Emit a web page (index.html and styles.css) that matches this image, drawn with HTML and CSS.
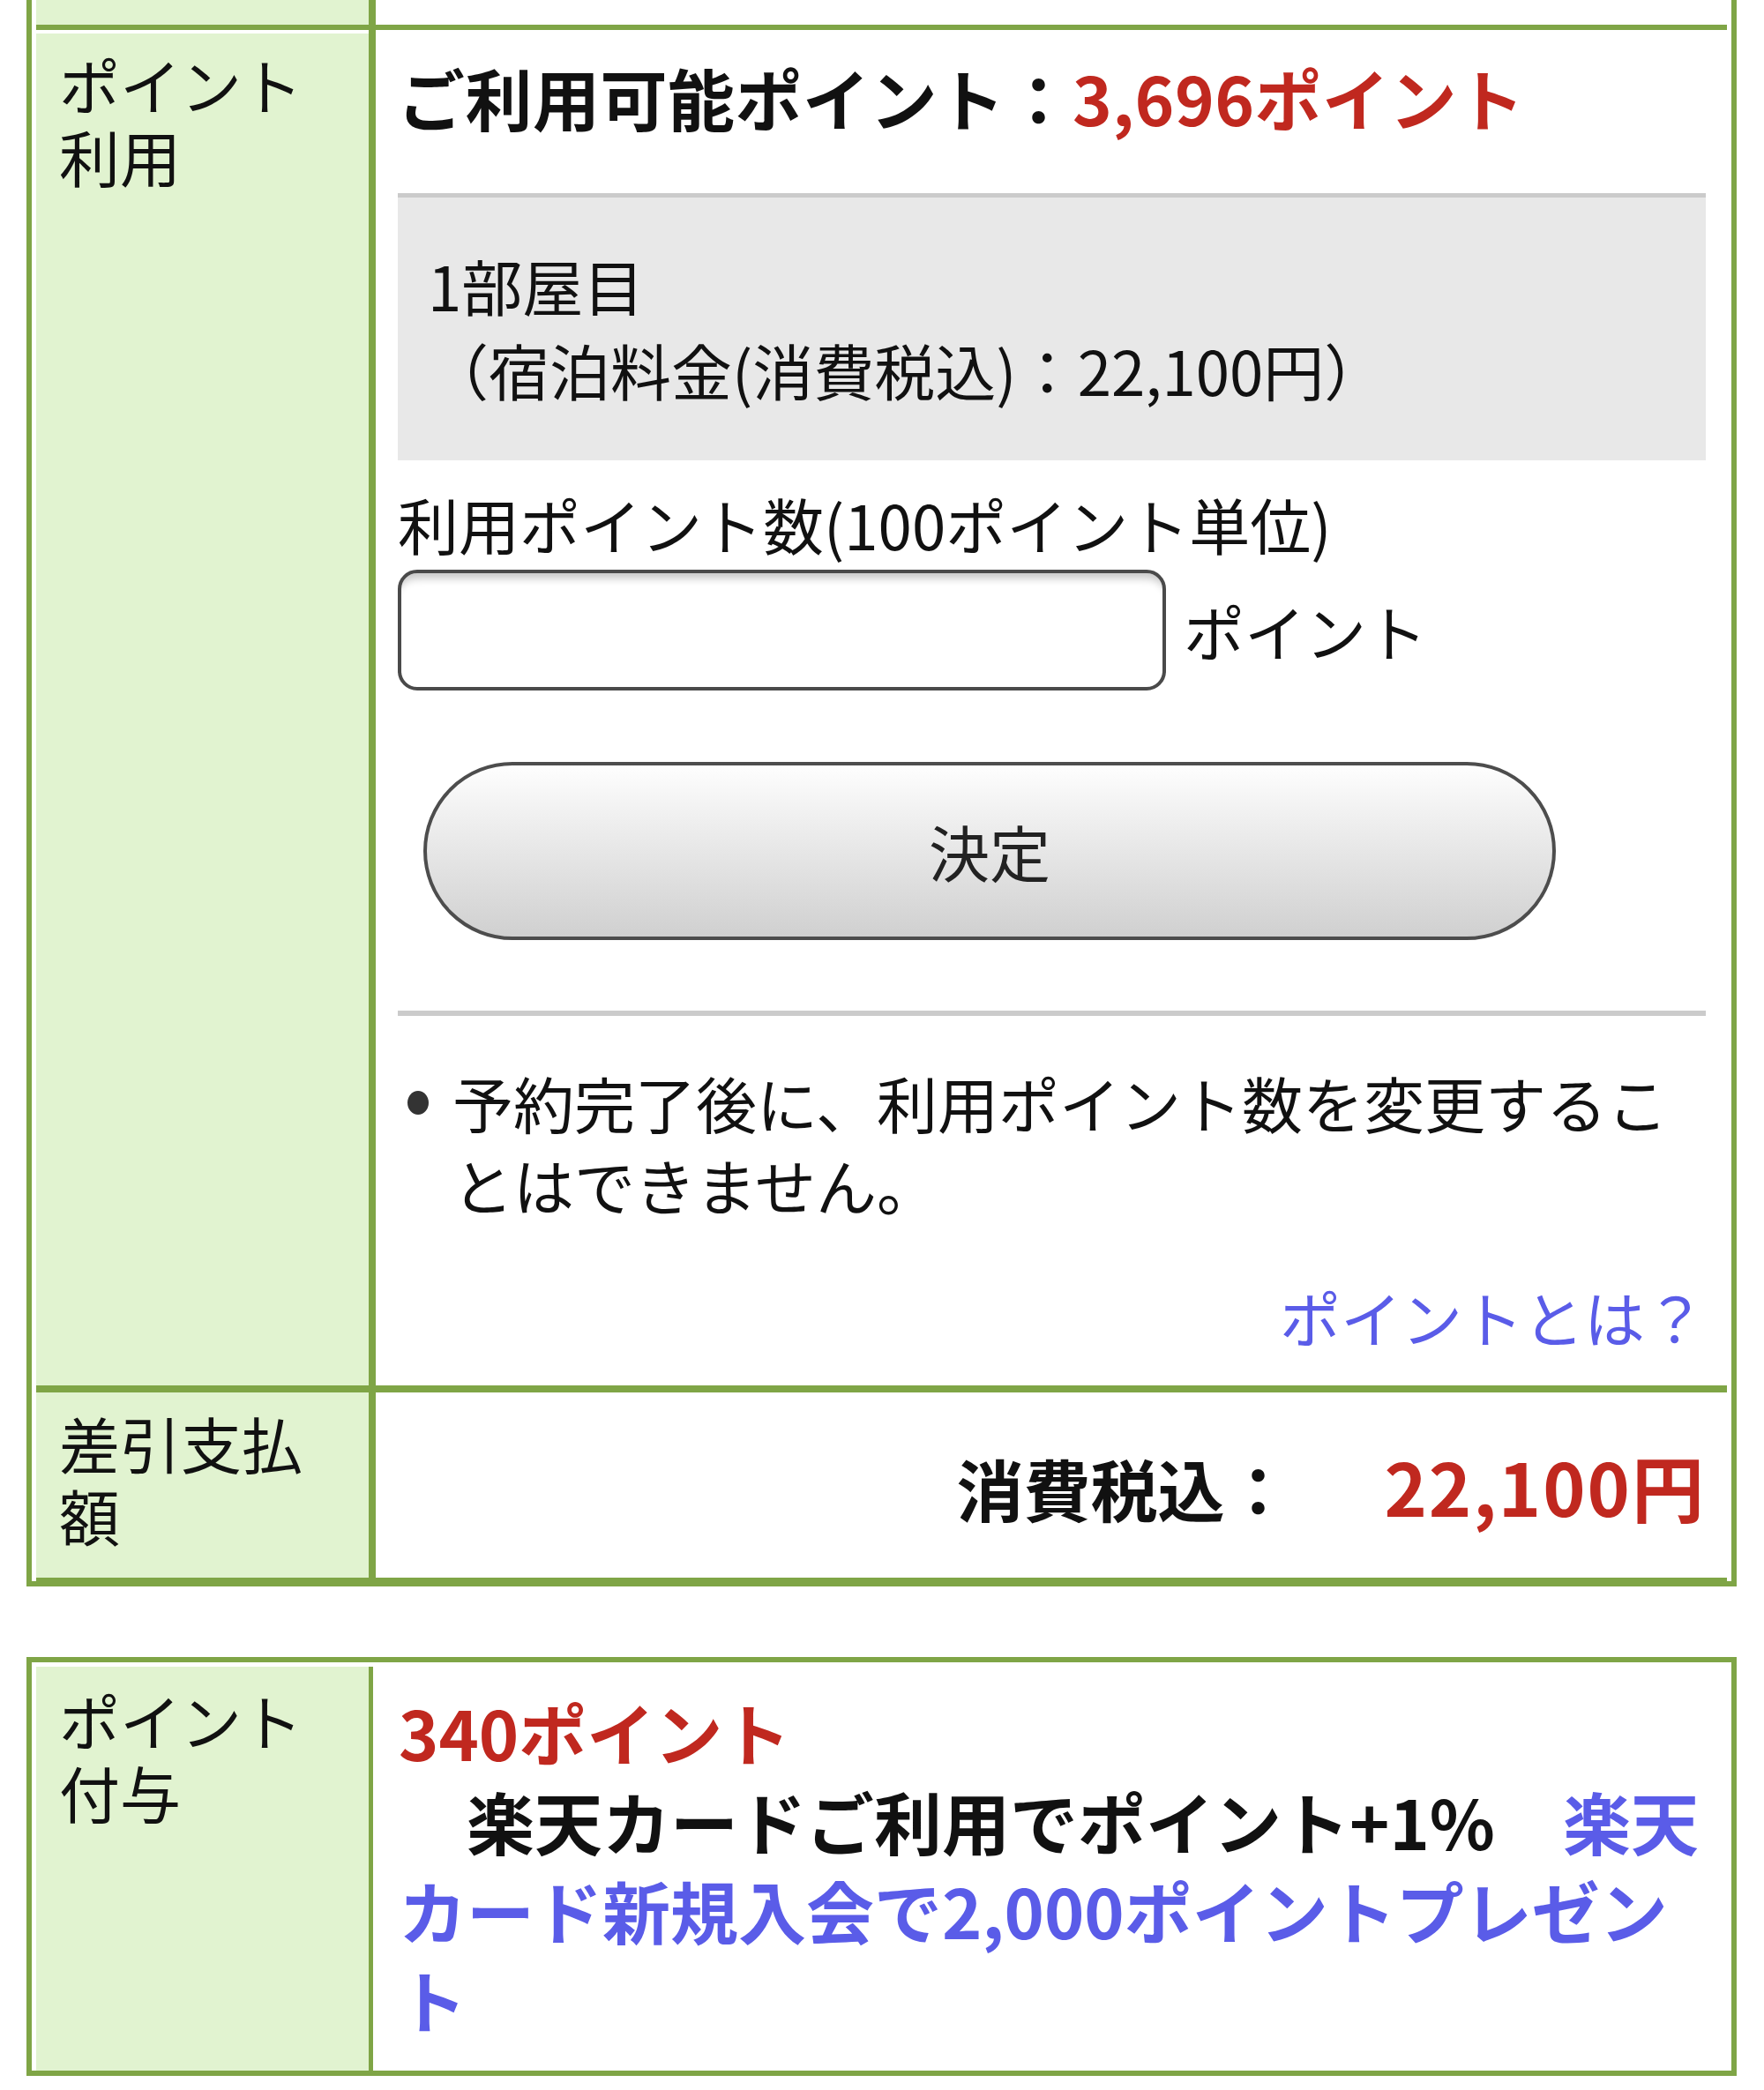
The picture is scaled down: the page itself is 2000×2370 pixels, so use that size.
FILE: index.html
```html
<!DOCTYPE html>
<html>
<head>
  <meta charset="UTF-8">
  <title>ポイント利用</title>
  <link rel="stylesheet" href="styles.css">
</head>
<body>

  <!-- payment table (continues from above) -->
  <table class="pay">
    <tr class="prev">
      <th></th>
      <td></td>
    </tr>
    <tr class="use">
      <th>ポイント利用</th>
      <td>
        <p class="avail">ご利用可能ポイント：<span class="red">3,696ポイント</span></p>
        <div class="room">1部屋目<br>（宿泊料金(消費税込)：22,100円）</div>
        <p class="label">利用ポイント数(100ポイント単位)</p>
        <div class="entry">
          <input type="text" class="points">
          <span>ポイント</span>
        </div>
        <button class="decide">決定</button>
        <hr class="rule">
        <p class="note">予約完了後に、利用ポイント数を変更することはできません。</p>
        <p class="help"><a href="#">ポイントとは？</a></p>
      </td>
    </tr>
    <tr class="last">
      <th>差引支払額</th>
      <td class="total">
        <span class="tax">消費税込：</span><span class="red amount">22,100円</span>
      </td>
    </tr>
  </table>

  <!-- points awarded -->
  <table class="award">
    <tr>
      <th>ポイント付与</th>
      <td>
        <div class="red">340ポイント</div>
        <div>　楽天カードご利用でポイント+1%　<a href="#">楽天カード新規入会で2,000ポイントプレゼント</a></div>
      </td>
    </tr>
  </table>

</body>
</html>
```

FILE: styles.css
```css
body {
  margin: 0;
  font-family: "Noto Sans CJK JP", sans-serif;
  font-size: 69px;
  color: #111;
  background: #fff;
}
p { margin: 0; }
a { color: #5a5ce8; text-decoration: none; }
.red { color: #c0281f; }

table {
  box-sizing: border-box;
  width: 1939px;
  margin-left: 30px;
  table-layout: fixed;
  border-collapse: separate;
  border-spacing: 0;
  border: 6px solid #7fa546;
}
th {
  box-sizing: border-box;
  width: 377px;
  padding: 0 40px 0 26px;
  background: #e1f3d0;
  text-align: left;
  vertical-align: top;
  font-weight: normal;
  line-height: 82px;
}
td {
  padding: 0 24px 0 25px;
  vertical-align: top;
  border-left: 8px solid #7fa546;
}

/* first table */
.pay {
  border-top: 0;
  border-bottom-width: 6px;
  padding: 0 5px;
}
.prev th, .prev td {
  height: 28px;
  border-bottom: 6px solid #7fa546;
}
.use th, .use td { border-bottom: 8px solid #7fa546; }
.use th {
  border-top: 4px solid #fff;
  padding-top: 16px;
}
.use td { padding-top: 24px; padding-bottom: 31px; }

.avail {
  margin: 7px 0 63px;
  font-size: 76px;
  font-weight: bold;
  line-height: 91px;
  letter-spacing: 0.5px;
}
.room {
  background: #e8e8e8;
  border-top: 5px solid #cbcbcb;
  padding: 51px 34px 55px;
  line-height: 96px;
}
.label {
  margin: 31px 0 11px;
  line-height: 82px;
}
.entry {
  display: flex;
  align-items: center;
  gap: 20px;
}
.points {
  box-sizing: border-box;
  width: 871px;
  height: 137px;
  margin: 0;
  border: 4px solid #4a4a4a;
  border-radius: 22px;
  background: #fff;
  box-shadow: inset 0 14px 10px -8px rgba(0, 0, 0, 0.22);
}
.decide {
  display: block;
  box-sizing: border-box;
  width: 1284px;
  height: 202px;
  margin: 81px 0 0 29px;
  border: 4px solid #4d4d4d;
  border-radius: 101px;
  background: linear-gradient(#fefefe, #f2f2f2 25%, #d0d0d0);
  font-family: inherit;
  font-size: 69px;
  color: #222;
}
.rule {
  margin: 80px 0 0;
  height: 6px;
  border: 0;
  background: #cbcbcb;
}
.note {
  display: flex;
  align-items: flex-start;
  margin-top: 52px;
  line-height: 93px;
}
.note::before {
  content: "";
  flex: none;
  width: 24px;
  height: 27px;
  margin: 33px 27px 0 11px;
  border-radius: 50%;
  background: #333;
}
.help {
  margin-top: 57px;
  text-align: right;
  line-height: 93px;
}

.last th, .last td { border-bottom: 4px solid #7fa546; }
.last th { padding-top: 16px; padding-bottom: 30px; }
.total {
  vertical-align: middle;
  text-align: right;
  font-weight: bold;
  white-space: nowrap;
}
.tax { font-size: 76px; }
.amount { font-size: 82px; letter-spacing: 2px; margin-left: 105px; }

/* second table */
.award {
  margin-top: 80px;
  padding: 5px 5px 0;
}
.award th {
  padding-top: 19px;
}
.award td {
  border-left-width: 5px;
  padding: 23px 24px 31px 29px;
  font-size: 77px;
  font-weight: bold;
  line-height: 101px;
}
```
